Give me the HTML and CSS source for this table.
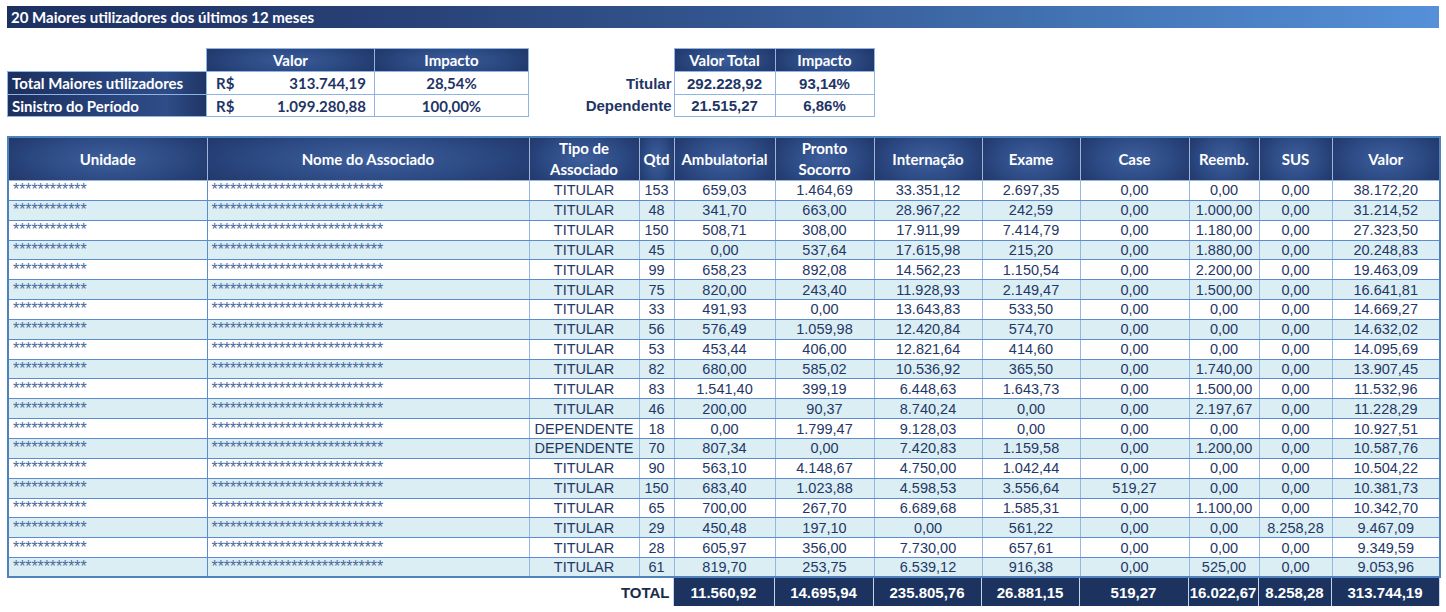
FILE: index.html
```html
<!DOCTYPE html>
<html lang="pt-BR">
<head>
<meta charset="utf-8">
<title>20 Maiores utilizadores</title>
<link rel="stylesheet" href="styles.css">
</head>
<body>
<div class="page">
  <div class="title">20 Maiores utilizadores dos últimos 12 meses</div>

  <div class="summary">
    <table class="sum1">
      <colgroup><col class="s1-a"><col class="s1-b"><col class="s1-c"></colgroup>
      <tr class="r-h"><th class="blank"></th><th class="hd">Valor</th><th class="hd">Impacto</th></tr>
      <tr class="r-1"><th class="lbl">Total Maiores utilizadores</th><td><div class="money"><span>R$</span><span>313.744,19</span></div></td><td>28,54%</td></tr>
      <tr class="r-2"><th class="lbl">Sinistro do Período</th><td><div class="money"><span>R$</span><span>1.099.280,88</span></div></td><td>100,00%</td></tr>
    </table>

    <table class="sum2">
      <colgroup><col class="s2-a"><col class="s2-b"><col class="s2-c"></colgroup>
      <tr class="r-h"><th class="blank"></th><th class="hd">Valor Total</th><th class="hd">Impacto</th></tr>
      <tr class="r-1"><th class="lbl">Titular</th><td>292.228,92</td><td>93,14%</td></tr>
      <tr class="r-2"><th class="lbl">Dependente</th><td>21.515,27</td><td>6,86%</td></tr>
    </table>
  </div>

  <table class="main">
    <colgroup>
      <col class="c-uni"><col class="c-nome"><col class="c-tipo"><col class="c-qtd">
      <col class="c-amb"><col class="c-ps"><col class="c-int"><col class="c-exa">
      <col class="c-case"><col class="c-reemb"><col class="c-sus"><col class="c-valor">
    </colgroup>
    <thead>
      <tr>
        <th>Unidade</th><th>Nome do Associado</th><th>Tipo de<br>Associado</th><th>Qtd</th>
        <th>Ambulatorial</th><th>Pronto<br>Socorro</th><th>Internação</th><th>Exame</th>
        <th>Case</th><th>Reemb.</th><th>SUS</th><th>Valor</th>
      </tr>
    </thead>
    <tbody>
      <tr><td class="ast">************</td><td class="ast">****************************</td><td>TITULAR</td><td>153</td><td>659,03</td><td>1.464,69</td><td>33.351,12</td><td>2.697,35</td><td>0,00</td><td>0,00</td><td>0,00</td><td>38.172,20</td></tr>
      <tr><td class="ast">************</td><td class="ast">****************************</td><td>TITULAR</td><td>48</td><td>341,70</td><td>663,00</td><td>28.967,22</td><td>242,59</td><td>0,00</td><td>1.000,00</td><td>0,00</td><td>31.214,52</td></tr>
      <tr><td class="ast">************</td><td class="ast">****************************</td><td>TITULAR</td><td>150</td><td>508,71</td><td>308,00</td><td>17.911,99</td><td>7.414,79</td><td>0,00</td><td>1.180,00</td><td>0,00</td><td>27.323,50</td></tr>
      <tr><td class="ast">************</td><td class="ast">****************************</td><td>TITULAR</td><td>45</td><td>0,00</td><td>537,64</td><td>17.615,98</td><td>215,20</td><td>0,00</td><td>1.880,00</td><td>0,00</td><td>20.248,83</td></tr>
      <tr><td class="ast">************</td><td class="ast">****************************</td><td>TITULAR</td><td>99</td><td>658,23</td><td>892,08</td><td>14.562,23</td><td>1.150,54</td><td>0,00</td><td>2.200,00</td><td>0,00</td><td>19.463,09</td></tr>
      <tr><td class="ast">************</td><td class="ast">****************************</td><td>TITULAR</td><td>75</td><td>820,00</td><td>243,40</td><td>11.928,93</td><td>2.149,47</td><td>0,00</td><td>1.500,00</td><td>0,00</td><td>16.641,81</td></tr>
      <tr><td class="ast">************</td><td class="ast">****************************</td><td>TITULAR</td><td>33</td><td>491,93</td><td>0,00</td><td>13.643,83</td><td>533,50</td><td>0,00</td><td>0,00</td><td>0,00</td><td>14.669,27</td></tr>
      <tr><td class="ast">************</td><td class="ast">****************************</td><td>TITULAR</td><td>56</td><td>576,49</td><td>1.059,98</td><td>12.420,84</td><td>574,70</td><td>0,00</td><td>0,00</td><td>0,00</td><td>14.632,02</td></tr>
      <tr><td class="ast">************</td><td class="ast">****************************</td><td>TITULAR</td><td>53</td><td>453,44</td><td>406,00</td><td>12.821,64</td><td>414,60</td><td>0,00</td><td>0,00</td><td>0,00</td><td>14.095,69</td></tr>
      <tr><td class="ast">************</td><td class="ast">****************************</td><td>TITULAR</td><td>82</td><td>680,00</td><td>585,02</td><td>10.536,92</td><td>365,50</td><td>0,00</td><td>1.740,00</td><td>0,00</td><td>13.907,45</td></tr>
      <tr><td class="ast">************</td><td class="ast">****************************</td><td>TITULAR</td><td>83</td><td>1.541,40</td><td>399,19</td><td>6.448,63</td><td>1.643,73</td><td>0,00</td><td>1.500,00</td><td>0,00</td><td>11.532,96</td></tr>
      <tr><td class="ast">************</td><td class="ast">****************************</td><td>TITULAR</td><td>46</td><td>200,00</td><td>90,37</td><td>8.740,24</td><td>0,00</td><td>0,00</td><td>2.197,67</td><td>0,00</td><td>11.228,29</td></tr>
      <tr><td class="ast">************</td><td class="ast">****************************</td><td>DEPENDENTE</td><td>18</td><td>0,00</td><td>1.799,47</td><td>9.128,03</td><td>0,00</td><td>0,00</td><td>0,00</td><td>0,00</td><td>10.927,51</td></tr>
      <tr><td class="ast">************</td><td class="ast">****************************</td><td>DEPENDENTE</td><td>70</td><td>807,34</td><td>0,00</td><td>7.420,83</td><td>1.159,58</td><td>0,00</td><td>1.200,00</td><td>0,00</td><td>10.587,76</td></tr>
      <tr><td class="ast">************</td><td class="ast">****************************</td><td>TITULAR</td><td>90</td><td>563,10</td><td>4.148,67</td><td>4.750,00</td><td>1.042,44</td><td>0,00</td><td>0,00</td><td>0,00</td><td>10.504,22</td></tr>
      <tr><td class="ast">************</td><td class="ast">****************************</td><td>TITULAR</td><td>150</td><td>683,40</td><td>1.023,88</td><td>4.598,53</td><td>3.556,64</td><td>519,27</td><td>0,00</td><td>0,00</td><td>10.381,73</td></tr>
      <tr><td class="ast">************</td><td class="ast">****************************</td><td>TITULAR</td><td>65</td><td>700,00</td><td>267,70</td><td>6.689,68</td><td>1.585,31</td><td>0,00</td><td>1.100,00</td><td>0,00</td><td>10.342,70</td></tr>
      <tr><td class="ast">************</td><td class="ast">****************************</td><td>TITULAR</td><td>29</td><td>450,48</td><td>197,10</td><td>0,00</td><td>561,22</td><td>0,00</td><td>0,00</td><td>8.258,28</td><td>9.467,09</td></tr>
      <tr><td class="ast">************</td><td class="ast">****************************</td><td>TITULAR</td><td>28</td><td>605,97</td><td>356,00</td><td>7.730,00</td><td>657,61</td><td>0,00</td><td>0,00</td><td>0,00</td><td>9.349,59</td></tr>
      <tr><td class="ast">************</td><td class="ast">****************************</td><td>TITULAR</td><td>61</td><td>819,70</td><td>253,75</td><td>6.539,12</td><td>916,38</td><td>0,00</td><td>525,00</td><td>0,00</td><td>9.053,96</td></tr>
    </tbody>
  </table>

  <table class="foot">
    <colgroup>
      <col class="f-lbl">
      <col class="c-amb"><col class="c-ps"><col class="c-int"><col class="c-exa">
      <col class="c-case"><col class="c-reemb"><col class="c-sus"><col class="c-valor">
    </colgroup>
    <tr>
      <th class="tot">TOTAL</th>
      <td>11.560,92</td><td>14.695,94</td><td>235.805,76</td><td>26.881,15</td>
      <td>519,27</td><td>16.022,67</td><td>8.258,28</td><td>313.744,19</td>
    </tr>
  </table>
</div>
</body>
</html>
```

FILE: styles.css
```css
* { box-sizing: border-box; }

body {
  margin: 0;
  background: #ffffff;
  font-family: "Liberation Sans", Arial, sans-serif;
}

.page {
  width: 1446px;
  padding: 6px 7px 0 7px;
}

.title {
  height: 22px;
  padding-left: 4px;
  background: linear-gradient(90deg, #1d3161 0%, #273f74 25%, #33558f 50%, #4374b4 75%, #5590d8 100%);
  color: #ffffff;
  font: bold 15px/22px "Lato", sans-serif;
  white-space: nowrap;
}

/* ---------- summary ---------- */
.summary {
  display: flex;
  margin-top: 20px;
}

table {
  border-collapse: collapse;
  table-layout: fixed;
  border-spacing: 0;
}

th, td { padding: 0; }

.sum1 { width: 521px; }
.s1-a { width: 199px; }
.s1-b { width: 168px; }
.s1-c { width: 154px; }

.sum2 { width: 345px; }
.s2-a { width: 145px; }
.s2-b { width: 101px; }
.s2-c { width: 99px; }

.r-h { height: 23px; }
.r-1 { height: 23px; }
.r-2 { height: 22px; }

.summary .blank { background: transparent; border: none; }

.summary .hd {
  background: radial-gradient(ellipse 70% 120% at 50% 50%, #3a5c9a 0%, #2a477f 50%, #1b2e5c 100%);
  color: #ffffff;
  font: bold 15px "Lato", sans-serif;
  text-align: center;
  border: 1px solid #8db4e2;
}

.sum1 .lbl {
  background: linear-gradient(90deg, #1c2f5d 0%, #27427a 45%, #2e4c87 80%, #1f3564 100%);
  color: #ffffff;
  font: bold 15px "Lato", sans-serif;
  text-align: left;
  padding-left: 4px;
  border: 1px solid #8db4e2;
  white-space: nowrap;
}

.sum1 td {
  border: 1px solid #8db4e2;
  color: #1f3566;
  font: bold 15px "Lato", sans-serif;
  text-align: center;
}

.money {
  display: flex;
  justify-content: space-between;
  padding: 0 8px 0 9px;
}

.sum2 .lbl {
  border: none;
  background: transparent;
  color: #1f3566;
  font: bold 15px "Liberation Sans", Arial, sans-serif;
  text-align: right;
  padding-right: 2px;
}

.sum2 td {
  border: 1px solid #8db4e2;
  color: #1f3566;
  font: bold 15px "Liberation Sans", Arial, sans-serif;
  text-align: center;
}

/* ---------- main table ---------- */
.main {
  width: 1432px;
  margin-top: 19px;
}

.c-uni { width: 199px; }
.c-nome { width: 322px; }
.c-tipo { width: 110px; }
.c-qtd { width: 35px; }
.c-amb { width: 101px; }
.c-ps { width: 99px; }
.c-int { width: 108px; }
.c-exa { width: 98px; }
.c-case { width: 109px; }
.c-reemb { width: 70px; }
.c-sus { width: 73px; }
.c-valor { width: 108px; }
.f-lbl { width: 666px; }

.main thead tr { height: 42px; }

.main th {
  background: radial-gradient(ellipse 75% 110% at 50% 50%, #3d5f9d 0%, #2b4881 50%, #1b2e5c 100%);
  color: #ffffff;
  font: bold 15px/21px "Lato", sans-serif;
  text-align: center;
  vertical-align: middle;
  border: 1px solid #9ab4da;
  border-top: 2px solid #4f81bd;
  white-space: nowrap;
}

.main th:first-child { border-left: 2px solid #4f81bd; }
.main th:last-child { border-right: 2px solid #4f81bd; }

.main tbody tr { height: 19.85px; }
.main tbody tr:nth-child(even) td { background: #dbeef4; }

.main td {
  border-top: 1px solid #5b8cd2;
  border-bottom: 1px solid #5b8cd2;
  border-left: 1px solid #95b7e3;
  border-right: 1px solid #95b7e3;
  color: #1f3866;
  font: 14.5px/18px "Liberation Sans", Arial, sans-serif;
  text-align: center;
  vertical-align: middle;
  white-space: nowrap;
  overflow: hidden;
}

.main td:first-child { border-left: 2px solid #4f81bd; border-right: 1px solid #5b8cd2; }
.main td:last-child { border-right: 2px solid #4f81bd; }
.main tbody tr:last-child td { border-bottom: 2px solid #4f81bd; }

.main td.ast {
  text-align: left;
  padding-left: 4px;
  font-size: 16px;
  line-height: 18px;
  letter-spacing: -0.1px;
  color: #4a6a9e;
}

/* ---------- footer ---------- */
.foot {
  width: 1432px;
  margin-top: 0;
}

.foot tr { height: 28px; }

.foot .tot {
  text-align: right;
  padding-right: 3px;
  color: #1c2a4a;
  font: bold 15px "Liberation Sans", Arial, sans-serif;
  border: none;
}

.foot td {
  background: #1b335e;
  color: #ffffff;
  font: bold 15px "Liberation Sans", Arial, sans-serif;
  text-align: center;
  border-left: 1px solid #c6d4e9;
  border-right: 1px solid #c6d4e9;
  white-space: nowrap;
}
```
